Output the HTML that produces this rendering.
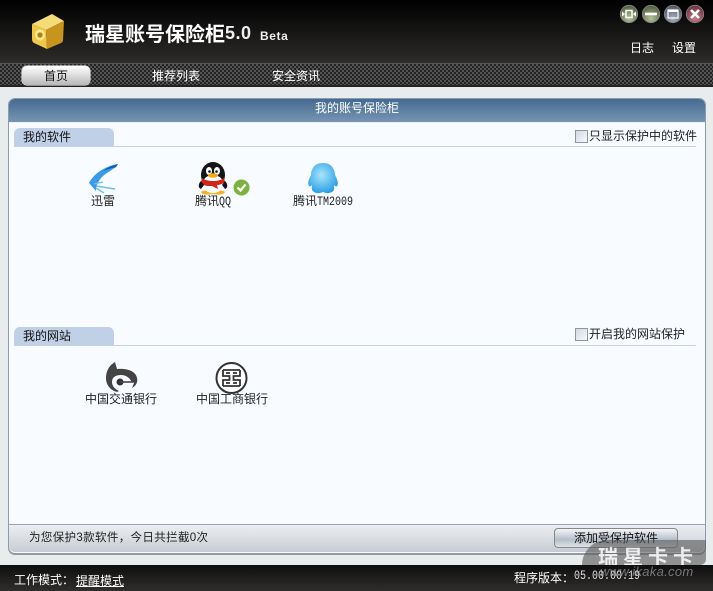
<!DOCTYPE html>
<html><head><meta charset="utf-8"><style>
html,body{margin:0;padding:0}
body{width:713px;height:591px;overflow:hidden;position:relative;background:#e8eced;font:12px/14px "WenQuanYi Zen Hei","Liberation Sans","Noto Sans CJK SC",sans-serif;color:#222}
div,span,svg{position:absolute;white-space:nowrap}
.t{font-size:12px;line-height:14px}
.w{color:#fff}
.c{text-align:center}
.m{font:normal 10px/14px "Liberation Mono",monospace;display:inline-block;transform:scaleY(1.25);transform-origin:50% 60%}
.cb{width:11px;height:11px;border:1px solid #8a97a8;background:linear-gradient(135deg,#d4dae2,#f6f8fb)}
</style></head><body>
<div style="left:0;top:0;width:713px;height:63px;background:linear-gradient(#000 0,#0a0a0a 15px,#2d2b29 62px)"></div>
<div style="left:0;top:63px;width:713px;height:1px;background:#555"></div>
<div style="left:0;top:64px;width:713px;height:22px;background-color:#3a3a3a;background-image:repeating-conic-gradient(#222 0 25%,#555 0 50%);background-size:4px 4px"></div>
<div style="left:0;top:85px;width:713px;height:2px;background:#222"></div>

<svg style="left:30px;top:13px" width="37" height="38" viewBox="0 0 37 38">
<path d="M2 11 L22 1 L34 8 L16 17Z" fill="#f4dc78"/>
<path d="M2 11 L16 17 L17 36 L4 30 Q2 29 2 26Z" fill="#efc84a"/>
<path d="M16 17 L34 8 L33 27 Q33 29 31 30 L17 36Z" fill="#c8941e"/>
<ellipse cx="10" cy="22" rx="5" ry="5.5" fill="#f9e88e"/><circle cx="10" cy="22" r="2.6" fill="#ad8016"/>
</svg>
<div class="w" style="left:85px;top:21px;font:bold 20px/24px 'Noto Sans CJK SC',sans-serif;width:140px">瑞星账号保险柜</div>
<div class="w" style="left:225px;top:21px;font:bold 18px/24px 'Liberation Sans',sans-serif;letter-spacing:.5px;color:#eee">5.0</div>
<div class="w" style="left:260px;top:28px;font:bold 12px/16px 'Liberation Sans',sans-serif;letter-spacing:.6px;color:#eee">Beta</div>

<svg style="left:619px;top:4px" width="88" height="20" viewBox="0 0 88 20">
<defs>
<radialGradient id="g1" cx=".5" cy=".75" r=".75"><stop offset="0" stop-color="#b4c29a"/><stop offset="1" stop-color="#4c5a3e"/></radialGradient>
<radialGradient id="g2" cx=".5" cy=".75" r=".75"><stop offset="0" stop-color="#a9b0c0"/><stop offset="1" stop-color="#4b5264"/></radialGradient>
<radialGradient id="g3" cx=".5" cy=".75" r=".75"><stop offset="0" stop-color="#c07c88"/><stop offset="1" stop-color="#6b2f3a"/></radialGradient>
</defs>
<circle cx="10" cy="10" r="8.7" fill="url(#g1)" stroke="#888" stroke-width=".8"/>
<rect x="7" y="6.5" width="6" height="7" fill="none" stroke="#fff" stroke-width="1.5"/><path d="M3 7.5 L6 10 L3 12.5Z M17 7.5 L14 10 L17 12.5Z" fill="#fff"/>
<circle cx="32" cy="10" r="8.7" fill="url(#g1)" stroke="#888" stroke-width=".8"/>
<rect x="26" y="8.7" width="12" height="2.6" fill="#fff"/>
<circle cx="54" cy="10" r="8.7" fill="url(#g2)" stroke="#888" stroke-width=".8"/>
<rect x="49" y="6" width="10" height="8" fill="none" stroke="#fff" stroke-width="1.2"/><rect x="49" y="6" width="10" height="2" fill="#fff"/>
<circle cx="76" cy="10" r="8.7" fill="url(#g3)" stroke="#888" stroke-width=".8"/>
<path d="M72 6 L80 14 M80 6 L72 14" stroke="#fff" stroke-width="2.6"/>
</svg>
<div class="t w" style="left:630px;top:41px">日志</div>
<div class="t w" style="left:672px;top:41px">设置</div>

<div style="left:22px;top:66px;width:68px;height:19px;border-radius:5px;background:linear-gradient(#fff,#d8d8d8 55%,#b8b8b8);box-shadow:0 0 0 .5px #fff"></div>
<div class="t" style="left:44px;top:69px;color:#111">首页</div>
<div class="t w" style="left:152px;top:69px">推荐列表</div>
<div class="t w" style="left:272px;top:69px">安全资讯</div>

<div style="left:8px;top:98px;width:696px;height:454px;border:1px solid #8c9bb0;border-radius:7px;background:#f8fbff;overflow:hidden;box-shadow:0 1px 0 #999"></div>
<div style="left:9px;top:99px;width:696px;height:24px;border-radius:6px 6px 0 0;background:linear-gradient(#456a90,#7a97b4)"></div>
<div style="left:9px;top:122px;width:696px;height:1px;background:#e8eef4"></div>
<div class="t w c" style="left:9px;top:101px;width:696px">我的账号保险柜</div>

<div style="left:14px;top:128px;width:100px;height:18px;background:#c0d0e6;border-radius:6px 6px 0 0"></div>
<div class="t" style="left:23px;top:130px;color:#111">我的软件</div>
<div style="left:14px;top:146px;width:682px;height:1px;background:#c8d2dc"></div>
<div class="cb" style="left:575px;top:130px"></div>
<div class="t" style="left:589px;top:129px">只显示保护中的软件</div>

<svg style="left:88px;top:163px" width="32" height="32" viewBox="0 0 32 32">
<path d="M30 1 C18 3 6 10 1 20 L8 28 C8 20 13 13 22 8 L28 4Z" fill="#3a9be4"/>
<path d="M30 1 C23 3 19 5 15 8 C20 6 25 5 28 4Z" fill="#0f5ab8"/>
<path d="M8 23 L27 26 M8 25 L16 30 M6 21 L15 19" stroke="#6fc0ea" stroke-width="1.4" fill="none"/>
</svg>
<div class="t c" style="left:73px;top:194px;width:60px">迅雷</div>

<svg style="left:197px;top:162px" width="32" height="33" viewBox="0 0 32 33">
<path d="M4 30 C7 27 25 27 28 30 C27 33 20 33 16 32 C12 33 5 33 4 30Z" fill="#eeb428"/>
<ellipse cx="16" cy="13" rx="12" ry="13" fill="#151515"/>
<ellipse cx="16" cy="22" rx="10.5" ry="9" fill="#fff"/>
<ellipse cx="12" cy="9" rx="3" ry="4" fill="#fff"/><ellipse cx="20" cy="9" rx="3" ry="4" fill="#fff"/>
<circle cx="12.5" cy="9.5" r="1.3" fill="#111"/><circle cx="19.5" cy="9.5" r="1.3" fill="#111"/>
<ellipse cx="16" cy="13.5" rx="5" ry="2.3" fill="#f0a818"/>
<path d="M5 16 C10 20 22 20 27 16 L28 20 C24 23 21 23 20 23 L21 27 L15 24 C10 24 7 24 4 21Z" fill="#d0261c"/>
<path d="M4 19 C1 22 1 26 4 27 L7 23Z M28 19 C31 22 31 26 28 27 L25 23Z" fill="#151515"/>
</svg>
<svg style="left:233px;top:179px" width="17" height="17" viewBox="0 0 17 17">
<circle cx="8.5" cy="8.5" r="8" fill="#7cb23e"/>
<path d="M4.5 8.5 L7.5 11.5 L12.5 5.5" stroke="#fff" stroke-width="2.2" fill="none"/>
</svg>
<div class="t" style="left:195px;top:194px">腾讯<i class="m">QQ</i></div>

<svg style="left:307px;top:162px" width="32" height="33" viewBox="0 0 32 33">
<defs><radialGradient id="q" cx=".45" cy=".4" r=".7"><stop offset="0" stop-color="#a8e6fc"/><stop offset="1" stop-color="#1c95e0"/></radialGradient></defs>
<path d="M16 1 C25 1 28 8 28 13 C30 17 32 21 30 24 C29 25 28 24 27 23 C27 26 28 28 25 30 C21 32 18 31 16 30 C14 31 10 32 7 30 C4 28 5 26 5 23 C4 24 3 25 2 24 C0 21 2 17 4 13 C4 8 7 1 16 1Z" fill="url(#q)"/>
</svg>
<div class="t" style="left:293px;top:194px">腾讯<i class="m">TM2009</i></div>

<div style="left:14px;top:327px;width:100px;height:18px;background:#c0d0e6;border-radius:6px 6px 0 0"></div>
<div class="t" style="left:23px;top:329px;color:#111">我的网站</div>
<div style="left:14px;top:345px;width:682px;height:1px;background:#c8d2dc"></div>
<div class="cb" style="left:575px;top:328px"></div>
<div class="t" style="left:589px;top:327px">开启我的网站保护</div>

<svg style="left:105px;top:362px" width="34" height="32" viewBox="0 0 34 32">
<path d="M10 0 C5 3 1 8 1 16 C1 23 5 28 12 30 L14 29 C10 27 7 24 7 20 C7 15 11 13 16 13 C21 13 25 16 26 19 L29 21 L27 26 C31 24 33 20 32 16 C31 10 24 6 12 7Z" fill="#444"/>
<circle cx="15" cy="20" r="3.5" fill="#333"/>
<path d="M15 20 H28" stroke="#444" stroke-width="1.6"/>
</svg>
<div class="t c" style="left:81px;top:392px;width:80px">中国交通银行</div>

<svg style="left:215px;top:362px" width="33" height="32" viewBox="0 0 33 32">
<circle cx="16.5" cy="16" r="15" fill="#fff" stroke="#333" stroke-width="2"/>
<path d="M8 8 H25 M8 24 H25 M8 8 V14 H14.5 V18 H8 V24 M25 8 V14 H18.5 V18 H25 V24 M11 11 H15 M18 11 H22 M11 21 H15 M18 21 H22" stroke="#333" stroke-width="1.8" fill="none"/>
</svg>
<div class="t c" style="left:192px;top:392px;width:80px">中国工商银行</div>

<div style="left:9px;top:524px;width:696px;height:28px;border-top:1px solid #9aa4ae;background:linear-gradient(#eceef1,#c8ccd2);border-radius:0 0 6px 6px;box-sizing:border-box"></div>
<div class="t" style="left:29px;top:531px;font-size:11.5px;letter-spacing:.35px;color:#222">为您保护3款软件，今日共拦截0次</div>
<div class="t c" style="left:554px;top:528px;width:124px;height:20px;line-height:19px;box-sizing:border-box;border:1px solid #888;border-radius:4px;background:linear-gradient(#f4f5f6,#b4bec8 60%,#dfe3e7);color:#111">添加受保护软件</div>

<div style="left:582px;top:540px;width:124px;height:25px;border-radius:34px 0 8px 0;background:rgba(90,90,90,.62)"></div>
<div style="left:598px;top:544px;font:bold 20px/24px 'Noto Sans CJK SC',sans-serif;color:rgba(255,255,255,.85);letter-spacing:5px">瑞星卡卡</div>

<div style="left:0;top:565px;width:713px;height:26px;background:linear-gradient(#0e0e0e,#302e2c)"></div>
<div style="left:600px;top:565px;font:italic 13px/14px 'Liberation Sans',sans-serif;color:#777;letter-spacing:.3px">www.ikaka.com</div>
<div class="t w" style="left:14px;top:573px">工作模式：</div>
<div class="t w" style="left:76px;top:574px;text-decoration:underline">提醒模式</div>
<div class="t w" style="left:514px;top:571px">程序版本：</div>
<div class="m" style="left:574px;top:571px;color:#ddd">05.00.00.19</div>
</body></html>
